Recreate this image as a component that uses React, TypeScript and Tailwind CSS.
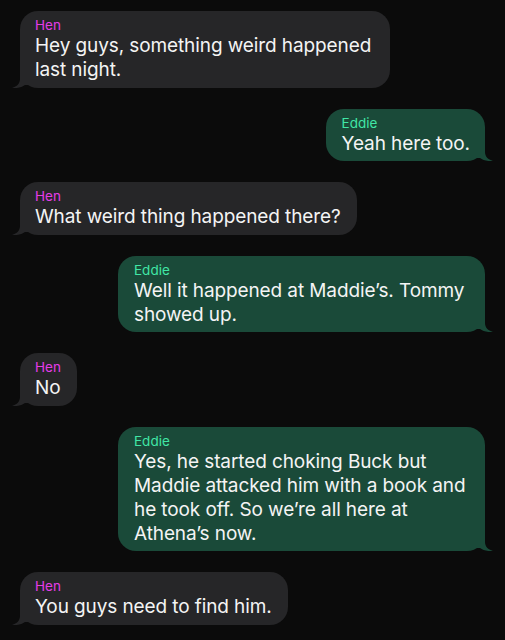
import React from "react";

type Msg = { from: "hen" | "eddie"; lines: string[]; w?: string };

const msgs: Msg[] = [
  { from: "hen", lines: ["Hey guys, something weird happened", "last night."], w: "w-[370px]" },
  { from: "eddie", lines: ["Yeah here too."] },
  { from: "hen", lines: ["What weird thing happened there?"] },
  { from: "eddie", lines: ["Well it happened at Maddie\u2019s. Tommy", "showed up."], w: "w-[367px]" },
  { from: "hen", lines: ["No"] },
  {
    from: "eddie",
    lines: [
      "Yes, he started choking Buck but",
      "Maddie attacked him with a book and",
      "he took off. So we\u2019re all here at",
      "Athena\u2019s now.",
    ],
    w: "w-[367px]",
  },
  { from: "hen", lines: ["You guys need to find him."] },
];

function Tail({ side, color }: { side: "left" | "right"; color: string }) {
  const d = "M8 0 L8 9 C8 13.5 5 16.5 0 18 C5 18.6 10 17.2 13 15 L20 15 L20 0 Z";
  return (
    <svg
      width="20"
      height="18"
      viewBox="0 0 20 18"
      className={
        side === "left"
          ? "absolute bottom-0 left-[-8px]"
          : "absolute bottom-0 right-[-8px] -scale-x-100"
      }
    >
      <path d={d} fill={color} />
    </svg>
  );
}

function Bubble({ m }: { m: Msg }) {
  const hen = m.from === "hen";
  const bg = hen ? "#262628" : "#1a4a39";
  return (
    <div className={hen ? "flex justify-start pl-[20px]" : "flex justify-end pr-[20px]"}>
      <div
        className={
          "relative rounded-[18px] pt-[6px] pb-[5.5px] " +
          (hen ? "bg-[#262628] pl-[15px] pr-[16px] " : "bg-[#1a4a39] pl-[16px] pr-[15px] ") +
          (m.w ?? "w-fit")
        }
      >
        <Tail side={hen ? "left" : "right"} color={bg} />
        <div
          className={
            "relative text-[13.5px] leading-[17px] " +
            (hen ? "text-[#e53ce8]" : "text-[#40e6a6]")
          }
        >
          {hen ? "Hen" : "Eddie"}
        </div>
        <div className="relative text-[19px] leading-[24px] tracking-[-0.1px] text-[#f4f4f4] whitespace-nowrap">
          {m.lines.map((l, i) => (
            <div key={i}>{l}</div>
          ))}
        </div>
      </div>
    </div>
  );
}

export default function App() {
  return (
    <div
      className="w-[505px] h-[640px] bg-[#0b0b0b] overflow-hidden flex flex-col gap-[21px] pt-[11px]"
      style={{ fontFamily: "Inter, 'Noto Sans', sans-serif" }}
    >
      {msgs.map((m, i) => (
        <Bubble key={i} m={m} />
      ))}
    </div>
  );
}
